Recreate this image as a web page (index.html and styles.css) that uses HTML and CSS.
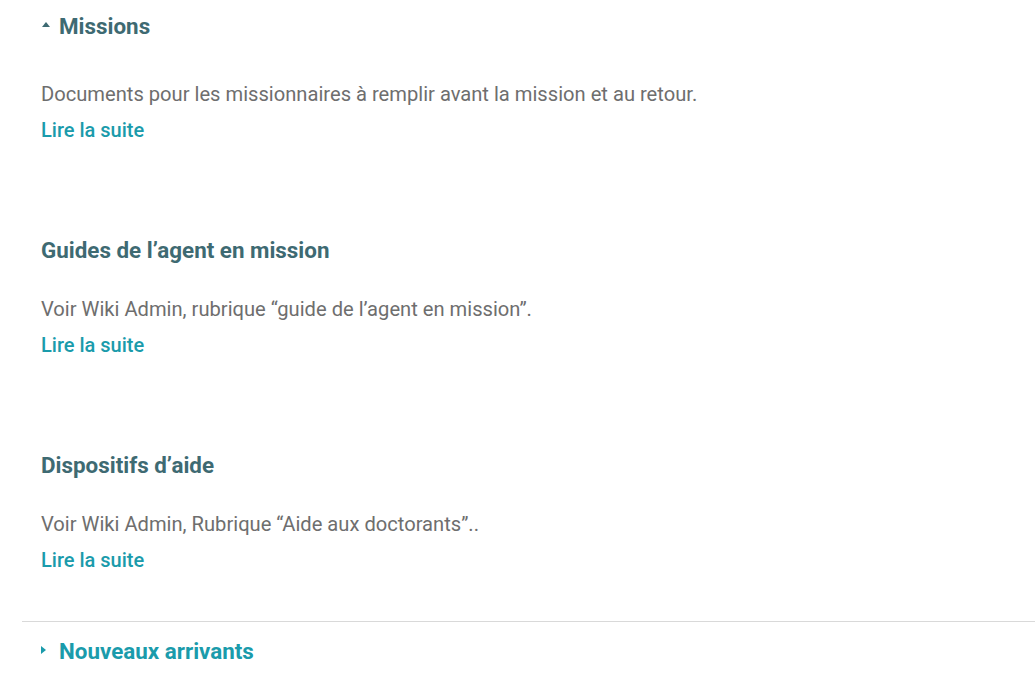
FILE: index.html
```html
<!DOCTYPE html>
<html lang="fr">
<head>
<meta charset="utf-8">
<link rel="stylesheet" href="styles.css">
</head>
<body>
<div class="page">
  <section class="acc acc-open">
    <div class="acc-head">
      <span class="caret caret-up"></span>
      <span class="acc-title">Missions</span>
    </div>
    <div class="acc-body">
      <div class="item item-first">
        <p class="desc">Documents pour les missionnaires à remplir avant la mission et au retour.</p>
        <a class="more" href="#">Lire la suite</a>
      </div>
      <div class="item">
        <h3 class="item-title">Guides de l’agent en mission</h3>
        <p class="desc">Voir Wiki Admin, rubrique “guide de l’agent en mission”.</p>
        <a class="more" href="#">Lire la suite</a>
      </div>
      <div class="item">
        <h3 class="item-title">Dispositifs d’aide</h3>
        <p class="desc">Voir Wiki Admin, Rubrique “Aide aux doctorants”..</p>
        <a class="more" href="#">Lire la suite</a>
      </div>
    </div>
  </section>
  <section class="acc acc-closed">
    <div class="acc-head">
      <span class="caret caret-right"></span>
      <span class="acc-title">Nouveaux arrivants</span>
    </div>
  </section>
</div>
</body>
</html>
```
FILE: styles.css
```css
* { box-sizing: border-box; }
body {
  margin: 0;
  font-family: Roboto, "Liberation Sans", sans-serif;
  background: #fff;
}
.page {
  padding-left: 22px;
}
.acc-head {
  display: flex;
  align-items: center;
  padding-left: 19px;
  height: 26px;
}
.acc-open .acc-head {
  margin-top: 13px;
}
.acc-title {
  font-size: 22.4px;
  font-weight: 700;
  line-height: 26px;
  color: #3e6a72;
}
.acc-closed {
  border-top: 1px solid #d9d9d9;
  margin-top: 43px;
}
.acc-closed .acc-head {
  margin-top: 16px;
}
.acc-closed .acc-title {
  color: #1a9bab;
}
.caret {
  display: inline-block;
  width: 0;
  height: 0;
}
.caret-up {
  border-left: 4px solid transparent;
  border-right: 4px solid transparent;
  border-bottom: 5px solid #3e6a72;
  margin-left: 1px;
  margin-right: 9px;
  margin-top: -4px;
}
.caret-right {
  border-top: 4px solid transparent;
  border-bottom: 4px solid transparent;
  border-left: 5px solid #1a9bab;
  margin-left: 0;
  margin-right: 13px;
  margin-top: -3px;
}
.acc-body {
  padding-left: 19px;
}
.item {
  margin-top: 89px;
}
.item-first {
  margin-top: 38px;
}
.item-title {
  margin: 0 0 29px;
  font-size: 22.4px;
  font-weight: 700;
  line-height: 26px;
  color: #3e6a72;
}
.desc {
  margin: 0;
  font-size: 20.15px;
  line-height: 35px;
  color: #6e6e6e;
}
.more {
  display: block;
  font-size: 20px;
  line-height: 36px;
  color: #1a9bab;
  font-weight: 500;
  text-decoration: none;
}
```
